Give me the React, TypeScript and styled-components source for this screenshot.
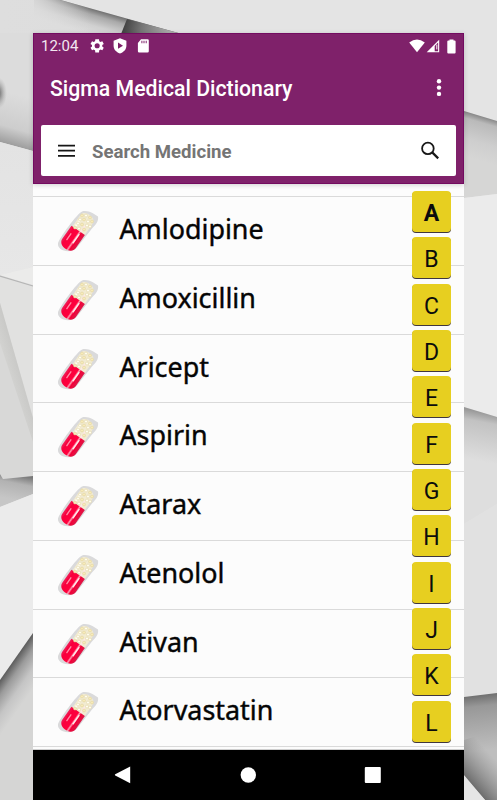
import React from 'react';
import styled, { createGlobalStyle } from 'styled-components';

const GlobalStyle = createGlobalStyle`
  * { box-sizing: border-box; }
  body { margin: 0; background: #e4e4e4; overflow: hidden; }
  button { border: 0; padding: 0; margin: 0; background: none; }
  svg { display: block; }
`;

const Page = styled.div`
  position: relative;
  width: 497px;
  height: 800px;
  padding: 33px 33px 0;
  overflow: hidden;
`;

const BackdropArt = styled.svg`
  position: absolute;
  inset: 0;
`;

const Phone = styled.main`
  position: relative;
  width: 431px;
  height: 767px;
  display: flex;
  flex-direction: column;
  background: #fcfcfc;
`;

const Header = styled.header`
  position: relative;
  z-index: 1;
  height: 151px;
  flex: none;
  background: #7f216a;
  border: 1px solid #730b60;
  box-shadow: 0 1px 5px rgba(0, 0, 0, 0.18);
`;

const StatusBar = styled.div`
  height: 25px;
  display: flex;
  align-items: center;
  padding: 0 7px 0 7px;
  color: #f3e6f0;
`;

const Clock = styled.span`
  width: 48px;
  font: 400 15px/25px Roboto, sans-serif;
`;

const StatusIcon = styled.svg<{ $gap?: number }>`
  margin: -1px 0 0 ${(p) => p.$gap ?? 0}px;
  fill: #fff;
  flex: none;
`;

const Spacer = styled.div`
  flex: 1;
`;

const TitleBar = styled.div`
  height: 66px;
  display: flex;
  align-items: center;
  justify-content: space-between;
  padding: 0 16px 8px 16px;
`;

const Title = styled.h1`
  margin: 0;
  font: 500 21.25px/28px Roboto, sans-serif;
  color: #fff;
  white-space: nowrap;
  padding-top: 2px;
`;

const SearchBox = styled.div`
  height: 51px;
  margin: 0 7px;
  padding: 0 16px 0 16px;
  display: flex;
  align-items: center;
  background: #fff;
  border-radius: 2px;
`;

const SearchLabel = styled.span`
  flex: 1;
  margin-left: 16px;
  font: 700 18.6px/24px Roboto, sans-serif;
  color: #757575;
  padding-top: 3px;
`;

const Content = styled.section`
  position: relative;
  height: 566px;
  overflow: hidden;
  border-bottom: 1px solid #cfcfcf;
`;

const MedicineList = styled.ul`
  list-style: none;
  margin: 0;
  padding: 12.4px 0 0;
`;

const MedicineRow = styled.li`
  height: 68.7px;
  display: flex;
  align-items: flex-start;
  padding: 12px 0 0 24px;
  border-top: 1px solid #dadada;
  &:last-child { height: 69.7px; border-bottom: 1px solid #dadada; }
`;

const MedicineName = styled.span`
  margin: 1px 0 0 18.4px;
  font: 400 26.9px/38px 'Noto Sans', sans-serif;
  color: #050505;
  -webkit-text-stroke: 0.4px #050505;
  white-space: nowrap;
`;

const LetterIndex = styled.nav`
  position: absolute;
  top: 7px;
  right: 13px;
  display: flex;
  flex-direction: column;
  gap: 5.33px;
`;

const LetterKey = styled.button<{ $active?: boolean }>`
  width: 39px;
  height: 41px;
  padding-top: 4px;
  border-radius: 4px;
  background: #e7cf20;
  box-shadow: 0 1px 0.5px #40373f;
  color: #0c0c0c;
  font: ${(p) => (p.$active ? 700 : 400)} 23px/37px Roboto, sans-serif;
`;

const NavBar = styled.footer`
  height: 50px;
  flex: 1;
  display: flex;
  align-items: center;
  justify-content: space-between;
  padding: 0 82px 0 81px;
  background: #000;
`;

const medicines = ['Amlodipine', 'Amoxicillin', 'Aricept', 'Aspirin', 'Atarax', 'Atenolol', 'Ativan', 'Atorvastatin'];
const letters = 'ABCDEFGHIJKL'.split('');

/* Overlapping sheets of grey paper, each with a soft shadow along its edge. */
function Backdrop() {
  return (
    <BackdropArt width="497" height="800" viewBox="0 0 497 800" aria-hidden="true">
      <defs>
        <linearGradient id="topEdge" gradientUnits="userSpaceOnUse" x1="115" y1="15" x2="108" y2="39">
          <stop offset="0" stopColor="#6e6e6e" /><stop offset=".25" stopColor="#a9a9a9" /><stop offset=".65" stopColor="#d0d0d0" /><stop offset="1" stopColor="#dcdcdc" />
        </linearGradient>
        <linearGradient id="topFade" x1="0" x2="1" y1="0" y2="0">
          <stop offset="0" stopColor="#dedede" /><stop offset=".2" stopColor="#dedede" stopOpacity=".8" /><stop offset=".5" stopColor="#dedede" stopOpacity="0" />
        </linearGradient>
        <linearGradient id="gap" gradientUnits="userSpaceOnUse" x1="125" y1="24" x2="168" y2="34">
          <stop offset="0" stopColor="#444" /><stop offset=".4" stopColor="#777" /><stop offset="1" stopColor="#aaa" />
        </linearGradient>
        <linearGradient id="left1" gradientUnits="userSpaceOnUse" x1="20" y1="95" x2="6" y2="145">
          <stop offset="0" stopColor="#dcdcdc" /><stop offset=".65" stopColor="#cdcdcd" /><stop offset="1" stopColor="#999" />
        </linearGradient>
        <linearGradient id="left2" x1="0" x2="0" y1="0" y2="1">
          <stop offset="0" stopColor="#e3e3e3" /><stop offset="1" stopColor="#e7e7e7" />
        </linearGradient>
        <linearGradient id="left3" gradientUnits="userSpaceOnUse" x1="0" y1="372" x2="20" y2="366">
          <stop offset="0" stopColor="#d9d9d7" /><stop offset="1" stopColor="#c8c8c6" />
        </linearGradient>
        <linearGradient id="left4" gradientUnits="userSpaceOnUse" x1="25" y1="476" x2="20" y2="501">
          <stop offset="0" stopColor="#777" /><stop offset=".35" stopColor="#b2b2b2" /><stop offset="1" stopColor="#c6c6c6" />
        </linearGradient>
        <linearGradient id="left5" gradientUnits="userSpaceOnUse" x1="15" y1="657" x2="42" y2="676">
          <stop offset="0" stopColor="#555" /><stop offset=".3" stopColor="#9b9b9b" /><stop offset=".65" stopColor="#c5c5c5" /><stop offset="1" stopColor="#d5d5d4" />
        </linearGradient>
        <linearGradient id="right1" gradientUnits="userSpaceOnUse" x1="482" y1="116" x2="470" y2="158">
          <stop offset="0" stopColor="#858585" /><stop offset=".15" stopColor="#bababa" /><stop offset=".6" stopColor="#cecece" /><stop offset="1" stopColor="#d6d6d5" />
        </linearGradient>
        <linearGradient id="right2" gradientUnits="userSpaceOnUse" x1="482" y1="412" x2="473" y2="460">
          <stop offset="0" stopColor="#999" /><stop offset=".2" stopColor="#c2c2c2" /><stop offset="1" stopColor="#dedede" />
        </linearGradient>
        <linearGradient id="right3" gradientUnits="userSpaceOnUse" x1="480" y1="695" x2="486" y2="750">
          <stop offset="0" stopColor="#707070" /><stop offset=".2" stopColor="#989898" /><stop offset="1" stopColor="#bebebe" />
        </linearGradient>
        <linearGradient id="cornerShade" gradientUnits="userSpaceOnUse" x1="475" y1="787" x2="500" y2="765">
          <stop offset="0" stopColor="#444" stopOpacity=".65" /><stop offset="1" stopColor="#777" stopOpacity="0" />
        </linearGradient>
        <radialGradient id="spot">
          <stop offset="0" stopColor="#555" /><stop offset=".35" stopColor="#777" stopOpacity=".7" /><stop offset="1" stopColor="#aaa" stopOpacity="0" />
        </radialGradient>
      </defs>
      <rect width="497" height="800" fill="#e4e4e4" />
      <path d="M0 0H60L182 34L34 151L0 142Z" fill="#dcdcdc" />
      <path d="M50 -3L182 34H34V0Z" fill="url(#topEdge)" />
      <path d="M0 0H60L182 34H0Z" fill="url(#topFade)" />
      <path d="M127 19L182 34H121Z" fill="url(#gap)" />
      <path d="M0 33H33V151L0 142Z" fill="url(#left1)" />
      <ellipse cx="-2" cy="93" rx="9" ry="16" fill="url(#spot)" />
      <path d="M0 142L33 151V267L0 275Z" fill="url(#left2)" />
      <path d="M0 275L33 267V285Z" fill="#ebebea" />
      <path d="M0 276L33 285V418L0 303Z" fill="#e1e1e0" />
      <path d="M0 276L33 286" stroke="#b5b5b5" strokeWidth="1.2" />
      <path d="M0 303L33 418V476L3 479L0 474Z" fill="#d8d8d7" />
      <path d="M-6 325L0 303L33 418V442Z" fill="url(#left3)" />
      <path d="M0 474L3 479L33 476V494L0 507Z" fill="url(#left4)" />
      <path d="M0 507L33 494V633L0 680Z" fill="#ebebeb" />
      <path d="M0 680L33 633V800H0Z" fill="url(#left5)" />
      <path d="M464 111L497 121V194L464 198Z" fill="url(#right1)" />
      <path d="M464 198L497 194V417L464 407Z" fill="#ebebeb" />
      <path d="M464 407L497 417V504L464 524Z" fill="url(#right2)" />
      <path d="M464 524L497 504V693L464 697Z" fill="#e1e1e1" />
      <path d="M464 697L497 693V800H485L464 775Z" fill="url(#right3)" />
      <path d="M464 740L497 730V800H485L464 775Z" fill="url(#cornerShade)" />
      <path d="M464 776L485 800H464Z" fill="#e5e5e5" />
    </BackdropArt>
  );
}

const grains = [
  [25, 6], [29, 6], [33, 8], [23, 10], [27, 10], [31, 12], [35, 12], [21, 14], [25, 15], [30, 16], [18, 18], [22, 19], [27, 20], [33, 17],
];

function Capsule() {
  return (
    <svg width="44" height="44" viewBox="0 -.5 44 44" aria-hidden="true">
      <defs>
        <linearGradient id="redShell" x1="0" x2="1" y1="0" y2="0">
          <stop offset="0" stopColor="#f0205a" /><stop offset=".18" stopColor="#f9003c" /><stop offset=".55" stopColor="#ff003d" /><stop offset=".64" stopColor="#ff9ab2" /><stop offset=".74" stopColor="#f40038" /><stop offset="1" stopColor="#dc1848" />
        </linearGradient>
        <filter id="softCapsule"><feGaussianBlur stdDeviation=".6" /></filter>
      </defs>
      <g filter="url(#softCapsule)">
        <path d="M1 34C2 29 20 4 25 2C31 0 38 5 41 7C42 12 38 16 35 19L20 38C13 45 0 41 1 34Z" fill="#dadadb" />
        <g transform="rotate(35 21 22)">
          <path d="M13.5 21V7C13.5 0 28.5 0 28.5 7V21Z" fill="#f2ebd2" />
          <path d="M12.3 21H28.7V37C28.7 45.5 12.3 45.5 12.3 37Z" fill="url(#redShell)" />
          <path d="M16 12V19" stroke="#fffdf3" strokeWidth="2" strokeLinecap="round" />
          <path d="M23.5 14V20M23.5 24V34" stroke="#ffe7e8" strokeWidth="1.5" strokeLinecap="round" />
          <path d="M16.5 28V35" stroke="#ff8aa6" strokeWidth="1.4" strokeLinecap="round" />
        </g>
        {grains.map(([x, y], i) => (
          <circle key={i} cx={x} cy={y} r="1.5" fill={i % 2 ? '#fffdf0' : '#f7ebb9'} stroke="#dccf98" strokeWidth=".5" />
        ))}
      </g>
    </svg>
  );
}

export default function App() {
  return (
    <>
      <GlobalStyle />
      <Page>
        <Backdrop />
        <Phone>
          <Header>
            <StatusBar>
              <Clock>12:04</Clock>
              <StatusIcon width="16" height="16" viewBox="0 0 24 24">
                <path transform="translate(-1.5 -1.5) scale(1.1)" d="M19.4 13a7.8 7.8 0 0 0 0-2l2.1-1.6-2-3.5-2.5 1a8 8 0 0 0-1.7-1L15 3h-5l-.4 2.9a8 8 0 0 0-1.7 1l-2.4-1-2.1 3.5L5.5 11a7.8 7.8 0 0 0 0 2l-2.1 1.6 2.1 3.5 2.4-1a8 8 0 0 0 1.7 1L10 21h5l.3-2.9a8 8 0 0 0 1.7-1l2.5 1 2-3.5ZM12.5 15.5a3.5 3.5 0 1 1 0-7 3.5 3.5 0 0 1 0 7Z" />
              </StatusIcon>
              <StatusIcon $gap={7.4} width="16" height="16" viewBox="0 0 16 16">
                <path fillRule="evenodd" d="M8 .2 14.4 2.8v4.7c0 4-2.5 6.5-6.4 8-3.9-1.5-6.4-4-6.4-8V2.8ZM6 4.5v6.3L11 7.7Z" />
              </StatusIcon>
              <StatusIcon $gap={8} width="15" height="16" viewBox="0 0 15 16">
                <path fillRule="evenodd" d="M5 1.3h6.5q1.3 0 1.3 1.3v10.7q0 1.3-1.3 1.3H3.2q-1.3 0-1.3-1.3V5ZM5.4 2.8v2.5h1V2.8Zm2.1 0v2.5h1V2.8Zm2.2 0v2.5h1V2.8Z" />
              </StatusIcon>
              <Spacer />
              <StatusIcon width="16" height="14" viewBox="0 0 16 14">
                <path d="M.2 3.4Q8-2.5 15.8 3.4L8 13.2Z" />
              </StatusIcon>
              <StatusIcon $gap={1} width="14" height="14" viewBox="0 0 14 14">
                <path fillRule="evenodd" d="M.7 13.2 13.2.7v12.5ZM8.7 6.9v5.3h3.4V3.5Z" />
                <path d="M10.8 5.6v4.8" stroke="#fff" strokeWidth="1" />
              </StatusIcon>
              <StatusIcon $gap={7} width="9" height="15" viewBox="0 0 9 15">
                <path d="M2.5.4h4v1.2h1.1q1 0 1 1v10.8q0 1-1 1H1.3q-1 0-1-1V2.6q0-1 1-1h1.2Z" />
              </StatusIcon>
            </StatusBar>
            <TitleBar>
              <Title>Sigma Medical Dictionary</Title>
              <svg width="16" height="20" viewBox="0 0 16 20" fill="#fff" aria-label="More options">
                <circle cx="8" cy="3.3" r="2.2" /><circle cx="8" cy="9.6" r="2.2" /><circle cx="8" cy="15.9" r="2.2" />
              </svg>
            </TitleBar>
            <SearchBox>
              <svg width="19" height="14" viewBox="0 0 19 14" aria-label="Menu">
                <path d="M1 1.6h17M1 6.7h17M1 11.8h17" stroke="#161616" strokeWidth="1.8" />
              </svg>
              <SearchLabel>Search Medicine</SearchLabel>
              <svg width="20" height="20" viewBox="0 0 20 20" fill="none" stroke="#181818" aria-label="Search">
                <circle cx="7.9" cy="7.4" r="5.8" strokeWidth="1.8" /><path d="m12.2 11.4 6 6" strokeWidth="2.2" />
              </svg>
            </SearchBox>
          </Header>
          <Content>
            <MedicineList>
              {medicines.map((name) => (
                <MedicineRow key={name}>
                  <Capsule />
                  <MedicineName>{name}</MedicineName>
                </MedicineRow>
              ))}
            </MedicineList>
            <LetterIndex>
              {letters.map((letter) => (
                <LetterKey key={letter} $active={letter === 'A'}>{letter}</LetterKey>
              ))}
            </LetterIndex>
          </Content>
          <NavBar>
            <svg width="18" height="20" viewBox="0 0 18 20"><path d="M1.2 9.2Q.5 9.8 1.2 10.4L16.2 18.3V1.5Z" fill="#fff" /></svg>
            <svg width="18" height="18" viewBox="0 0 18 18"><circle cx="9.3" cy="9" r="7.7" fill="#fff" /></svg>
            <svg width="18" height="18" viewBox="0 0 18 18"><rect x=".8" y="1" width="16" height="16" rx="1" fill="#fff" /></svg>
          </NavBar>
        </Phone>
      </Page>
    </>
  );
}
